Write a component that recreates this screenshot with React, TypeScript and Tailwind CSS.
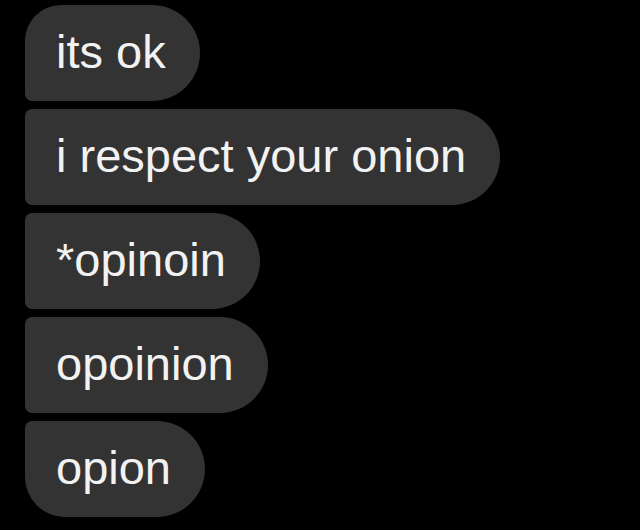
const messages = ["its ok", "i respect your onion", "*opinoin", "opoinion", "opion"];

function Bubble({ text, index, total }: { text: string; index: number; total: number }) {
    const isFirst = index === 0;
    const isLast = index === total - 1;
    return (
        <div
            className={
                "flex h-[96px] items-center rounded-r-[48px] bg-[#333333] pl-[31px] pr-[34px] text-[47px] leading-none text-[#f2f2f2] " +
                (isFirst ? "rounded-tl-[36px] " : "rounded-tl-[7px] ") +
                (isLast ? "rounded-bl-[40px]" : "rounded-bl-[7px]")
            }
        >
            <span className="pb-[4px]">{text}</span>
        </div>
    );
}

export default function App() {
    return (
        <div
            className="flex h-[530px] w-[640px] flex-col items-start gap-[8px] overflow-hidden bg-black pl-[25px] pt-[5px]"
            style={{ fontFamily: '"Liberation Sans", Arial, sans-serif' }}
        >
            {messages.map((m, i) => (
                <Bubble key={i} text={m} index={i} total={messages.length} />
            ))}
        </div>
    );
}
